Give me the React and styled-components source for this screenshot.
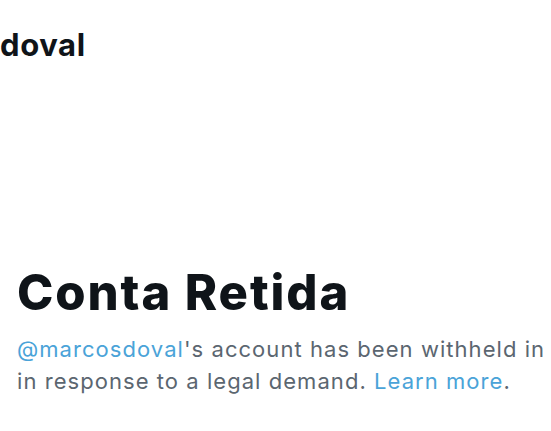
import React from 'react';
import styled, { createGlobalStyle } from 'styled-components';

const GlobalStyle = createGlobalStyle`
  html, body {
    margin: 0;
    padding: 0;
    background: #ffffff;
  }
  body {
    font-family: Inter, "Noto Sans", sans-serif;
    overflow: hidden;
  }
`;

const Page = styled.div`
  width: 551px;
  height: 431px;
  overflow: hidden;
  display: flex;
  flex-direction: column;
`;

const Header = styled.div`
  padding: 26px 0 0 0;
  height: 80px;
  box-sizing: border-box;
`;

const HeaderName = styled.h2`
  margin: 0;
  font-size: 31px;
  font-weight: 700;
  line-height: 38px;
  color: #0f1419;
  letter-spacing: 0.6px;
`;

const Notice = styled.section`
  padding: 184px 0 0 17px;
`;

const Title = styled.h1`
  margin: 0;
  font-size: 49px;
  font-weight: 800;
  line-height: 58px;
  color: #0f1419;
  letter-spacing: 1.9px;
`;

const Body = styled.p`
  margin: 11px 0 0 0;
  font-size: 22px;
  line-height: 32px;
  color: #5b6670;
  letter-spacing: 1.05px;
  white-space: nowrap;
`;

const Link = styled.a`
  color: #4aa3d8;
  text-decoration: none;
`;

export default function App() {
  return (
    <>
      <GlobalStyle />
      <Page>
        <Header>
          <HeaderName>doval</HeaderName>
        </Header>
        <Notice>
          <Title>Conta Retida</Title>
          <Body>
            <Link href="#">@marcosdoval</Link>'s account has been withheld in
            <br />
            in response to a legal demand. <Link href="#">Learn more</Link>.
          </Body>
        </Notice>
      </Page>
    </>
  );
}
